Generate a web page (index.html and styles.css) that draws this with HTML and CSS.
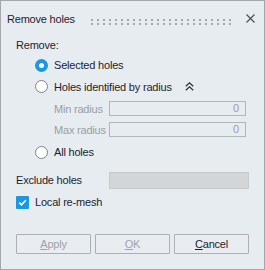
FILE: index.html
```html
<html>
  <head>
    <link rel="stylesheet" href="styles.css">
  </head>
  <body>
    <div class="dialog">
      <div class="titlebar">
        <span class="title">Remove holes</span>
        <svg class="grip" height="6">
          <defs>
            <pattern id="dots" width="6" height="4" patternUnits="userSpaceOnUse">
              <rect width="2" height="2" fill="#a2a7ac" />
            </pattern>
          </defs>
          <rect width="100%" height="6" fill="url(#dots)" />
        </svg>
        <svg class="close" width="9" height="9" viewBox="0 0 9 9">
          <path d="M0.5 0.5 L8.5 8.5 M8.5 0.5 L0.5 8.5" stroke="#4a4d52" stroke-width="1.1" fill="none" />
        </svg>
      </div>

      <div class="content">
        <div class="row heading">Remove:</div>

        <div class="row option r1">
          <span class="radio checked"></span>
          <span>Selected holes</span>
        </div>

        <div class="row option r2">
          <span class="radio"></span>
          <span>Holes identified by radius</span>
          <svg class="chevron" width="9" height="9" viewBox="0 0 9 9">
            <path d="M0.8 4.2 L4.5 0.8 L8.2 4.2 M0.8 8.2 L4.5 4.8 L8.2 8.2" stroke="#2b2e3a" stroke-width="1.2" fill="none" />
          </svg>
        </div>

        <div class="row sub r3">
          <span class="label disabled">Min radius</span>
          <span class="input">0</span>
        </div>

        <div class="row sub r4">
          <span class="label disabled">Max radius</span>
          <span class="input">0</span>
        </div>

        <div class="row option r5">
          <span class="radio"></span>
          <span>All holes</span>
        </div>

        <div class="row exclude">
          <span class="label wide">Exclude holes</span>
          <span class="input filled"></span>
        </div>

        <div class="row check-row">
          <span class="checkbox">
            <svg width="13" height="13" viewBox="0 0 13 13">
              <path d="M3.2 6.6 L5.5 8.9 L9.8 4.2" stroke="#fff" stroke-width="1.6" fill="none" />
            </svg>
          </span>
          <span>Local re-mesh</span>
        </div>
      </div>

      <div class="buttons">
        <button class="btn disabled"><u>A</u>pply</button>
        <button class="btn disabled"><u>O</u>K</button>
        <button class="btn"><u>C</u>ancel</button>
      </div>
    </div>
  </body>
</html>
```

FILE: styles.css
```css
*,
*::before,
*::after {
  padding: 0;
  margin: 0;
  box-sizing: border-box;
}

body {
  width: 265px;
  height: 270px;
  font-family: "Liberation Sans", Arial, sans-serif;
  font-size: 11px;
  letter-spacing: -0.2px;
  color: #1d1e2e;
  background-color: #e7ecf0;
  overflow: hidden;
}

.dialog {
  width: 265px;
  height: 270px;
  border: 1px solid #a3a7ab;
  background-color: #e7ecf0;
  display: flex;
  flex-direction: column;
}

.titlebar {
  height: 35px;
  display: flex;
  align-items: center;
  padding: 0 9px 0 6px;
}

.grip {
  flex: 1;
  margin: 6px 12px 0 16px;
}

.content {
  padding-left: 15px;
  display: flex;
  flex-direction: column;
}

.row {
  display: flex;
  align-items: center;
}

.heading {
  height: 18px;
}

.option {
  padding-left: 19px;
  gap: 6px;
}

.r1 {
  height: 22px;
}

.r2 {
  height: 21px;
}

.r3 {
  height: 23px;
}

.r4 {
  height: 19px;
}

.r5 {
  height: 26px;
}

.radio {
  width: 13px;
  height: 13px;
  border-radius: 50%;
  border: 1px solid #80848a;
  background-color: #fff;
}

.radio.checked {
  border: 4px solid #1d98de;
}

.chevron {
  margin-left: 7px;
}

.sub {
  padding-left: 38px;
}

.label {
  width: 55px;
}

.label.wide {
  width: 93px;
}

.disabled {
  color: #9a9da2;
}

.input {
  width: 137px;
  height: 15px;
  border: 1px solid #b3b6b9;
  text-align: right;
  padding-right: 6px;
  line-height: 13px;
  color: #9a9da2;
}

.exclude {
  height: 30px;
}

.input.filled {
  width: 140px;
  height: 17px;
  background-color: #d4d5d6;
  border-color: #c6c8ca;
}

.check-row {
  height: 14px;
  gap: 6px;
}

.checkbox {
  width: 13px;
  height: 13px;
  background-color: #1d98de;
  border-radius: 1px;
  display: flex;
}

.buttons {
  margin-top: 25px;
  padding-left: 15px;
  display: flex;
  gap: 4px;
}

.btn {
  width: 75px;
  height: 20px;
  font-family: inherit;
  font-size: 11px;
  letter-spacing: -0.2px;
  color: #1d1e2e;
  background-color: #e9edf1;
  border: 1px solid #adb0b3;
  border-radius: 1px;
}

.btn.disabled {
  color: #a0a3a8;
}
```
